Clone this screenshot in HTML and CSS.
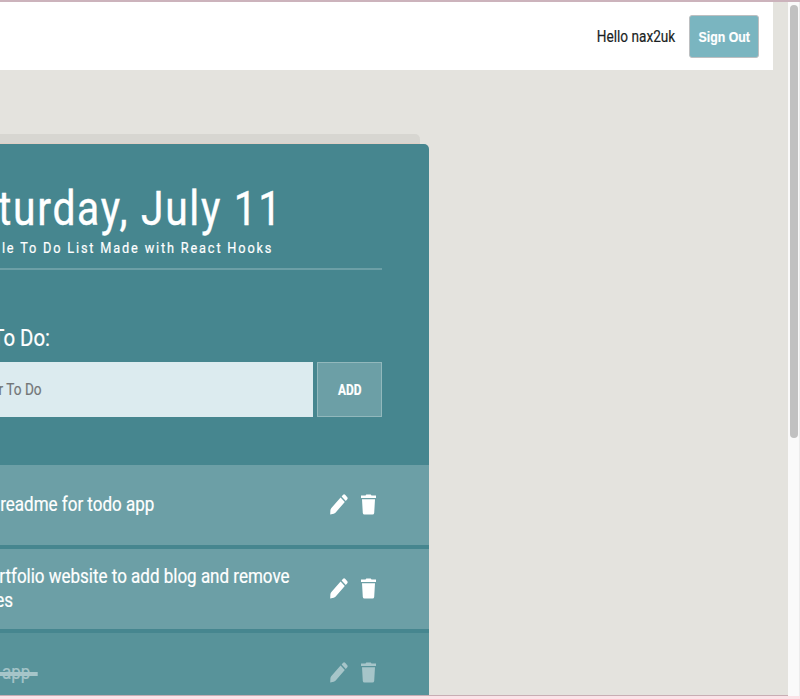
FILE: index.html
```html
<!DOCTYPE html>
<html lang="en">
<head>
<meta charset="utf-8">
<title>To Do List</title>
<link rel="stylesheet" href="styles.css">
</head>
<body>
<svg class="defs" aria-hidden="true">
  <symbol id="pencil" viewBox="0 0 18 21"><path d="M0.2 20.6 0.4 16.2Q.6 15 1.4 14L10.6 3.6 14.8 8 5.7 18.4Q4.8 19.4 3.7 19.8ZM11.6 2.5 13.1.8Q14.1-.1 15.1.8L17.3 3.3Q18 4.3 17.3 5.3L15.8 6.9Z"/></symbol>
  <symbol id="trash" viewBox="0 0 15 21"><path d="M0 1.4H4.5L5.3.4H9.7L10.5 1.4H15V4H0ZM1 5.3H14L13.2 19Q13 20.6 11.5 20.6H3.5Q2 20.6 1.8 19Z"/></symbol>
</svg>
<div class="window">
  <div class="page">
    <header class="nav">
      <span class="hello text">Hello nax2uk</span>
      <button class="signout"><span class="text">Sign Out</span></button>
    </header>
    <main class="card">
      <div class="intro">
        <h1 class="text">turday, July 11</h1>
        <p class="subtitle text">le To Do List Made with React Hooks</p>
      </div>
      <div class="label"><span class="text">To Do:</span></div>
      <div class="form">
        <div class="input"><span class="text">r To Do</span></div>
        <button class="add"><span class="text">ADD</span></button>
      </div>
      <ul class="list">
        <li class="item"><div class="task t1"><span class="text">readme for todo app</span></div><svg class="pencil"><use href="#pencil"/></svg><svg class="trash"><use href="#trash"/></svg></li>
        <li class="item"><div class="task t2"><span class="text">rtfolio website to add blog and remove</span><span class="text wrap">es</span></div><svg class="pencil"><use href="#pencil"/></svg><svg class="trash"><use href="#trash"/></svg></li>
        <li class="item done"><div class="task t3"><span class="text strike">app</span></div><svg class="pencil"><use href="#pencil"/></svg><svg class="trash"><use href="#trash"/></svg></li>
      </ul>
    </main>
  </div>
  <div class="scrollbar"><div class="thumb"></div></div>
</div>
</body>
</html>
```
FILE: styles.css
```css
* { box-sizing: border-box; }
body { margin: 0; width: 800px; height: 699px; overflow: hidden; font-family: Roboto, sans-serif; color: #fff; }
.defs { display: none; }
.window { display: flex; height: 699px; border-top: 2px solid #ccb3bc; border-bottom: 3px solid #fbe3e8; background: #fafafa; }
.page { display: flex; flex-direction: column; width: 788px; height: 694px; overflow: hidden; background: #e4e3de; border-bottom: 1px solid #c8adb4; }
.nav { display: flex; flex: none; justify-content: flex-end; align-items: center; width: 773px; height: 68px; padding-right: 14px; background: #fff; }
.text { display: block; flex: none; white-space: pre; transform: scaleX(.85); transform-origin: right center; -webkit-text-stroke: .2px currentColor; }
.hello { margin-right: 14px; font-size: 16px; color: #1b1f24; }
button { display: flex; align-items: center; justify-content: center; padding: 0; color: #fff; font-weight: 700; }
.signout { width: 70px; height: 43px; margin-top: 1px; border: 1px solid #bdbfc1; border-radius: 3px; background: #7ab5c0; font-family: "Liberation Sans", sans-serif; font-size: 14.5px; }
button .text { transform-origin: center; }
.signout .text { transform: scaleX(.85); }
.card { position: relative; width: 429px; height: 560px; margin-top: 74px; flex: none; border-radius: 0 5px 0 0; background: #46868f; }
.card::before { content: ""; position: absolute; left: 0; top: -10px; width: 420px; height: 10px; border-radius: 0 5px 0 0; background: linear-gradient(#d7d6d1 9px, #e0cfc5 9px); }
.intro { display: flex; flex-direction: column; align-items: flex-end; width: 382px; height: 126px; padding: 36px 102px 0 0; border-bottom: 2px solid #6c9fa6; }
h1 { margin: 0 -3px 0 0; font-size: 49px; line-height: 58px; font-weight: 400; letter-spacing: 2px; }
h1.text { transform: scaleX(.833); -webkit-text-stroke-width: .4px; }
.subtitle { margin: 0 7px 0 0; font-size: 15px; line-height: 20px; letter-spacing: 2.15px; }
.label { display: flex; justify-content: flex-end; width: 50px; height: 92px; padding-top: 54px; font-size: 24px; line-height: 28px; }
.form { display: flex; gap: 4px; height: 55px; }
.input { display: flex; align-items: center; justify-content: flex-end; width: 313px; padding-right: 271px; background: #dcebef; color: #737677; font-size: 16px; }
.add { width: 65px; border: 1px solid #92b8bc; background: #6c9fa6; font-family: Roboto, sans-serif; font-size: 14px; }
.list { display: flex; flex-direction: column; gap: 4px; margin: 48px 0 0; padding: 0; list-style: none; }
.item { display: flex; align-items: center; height: 80px; padding-bottom: 2px; background: #6c9fa6; fill: #fff; }
.done { background: #58939a; color: #a6c5c9; fill: #a6c5c9; }
.task { display: flex; flex-direction: column; align-items: flex-end; font-size: 20px; line-height: 24px; }
.t1 { width: 154px; margin-right: 176px; }
.t2 { width: 290px; margin-right: 40px; }
.t3 { width: 30px; margin-right: 300px; }
.wrap { margin-right: 277px; }
.strike::after { content: ""; position: absolute; left: -10px; right: -9px; top: 12px; height: 4px; background: #a6c5c9; }
.pencil { width: 18px; height: 21px; margin-right: 13px; }
.trash { width: 15px; height: 21px; }
.scrollbar { width: 12px; padding: 3px 0 0 2px; border-right: 1px solid #ececec; }
.thumb { width: 8px; height: 433px; border-radius: 4px; background: #c1c1c1; }
```
